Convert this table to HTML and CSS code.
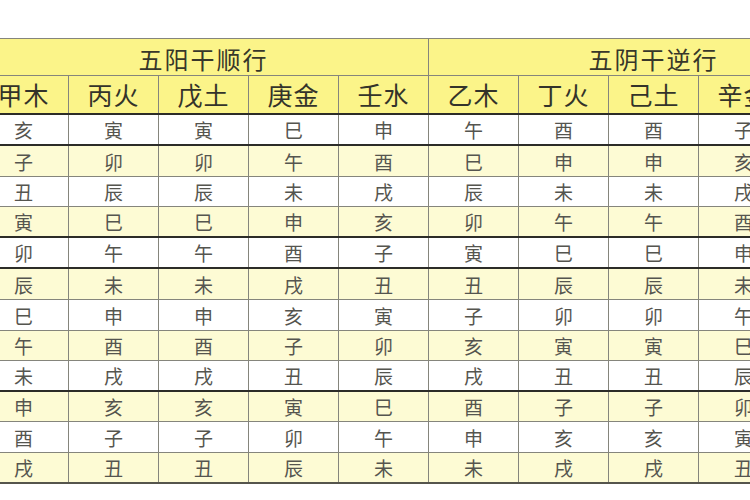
FILE: index.html
```html
<!DOCTYPE html>
<html lang="zh-CN">
<head>
<meta charset="utf-8">
<title>五阳干顺行 五阴干逆行</title>
<link rel="stylesheet" href="styles.css">
</head>
<body>
<div class="page">
<table class="stems">
  <colgroup>
    <col><col><col><col><col><col><col><col><col><col>
  </colgroup>
  <thead>
    <tr class="grp">
      <th colspan="5">五阳干顺行</th>
      <th colspan="5">五阴干逆行</th>
    </tr>
    <tr class="stem">
      <th>甲木</th><th>丙火</th><th>戊土</th><th>庚金</th><th>壬水</th>
      <th>乙木</th><th>丁火</th><th>己土</th><th>辛金</th><th>癸水</th>
    </tr>
  </thead>
  <tbody>
    <tr class="thick h30"><td>亥</td><td>寅</td><td>寅</td><td>巳</td><td>申</td><td>午</td><td>酉</td><td>酉</td><td>子</td><td>卯</td></tr>
    <tr class="h32"><td>子</td><td>卯</td><td>卯</td><td>午</td><td>酉</td><td>巳</td><td>申</td><td>申</td><td>亥</td><td>寅</td></tr>
    <tr class="h30"><td>丑</td><td>辰</td><td>辰</td><td>未</td><td>戌</td><td>辰</td><td>未</td><td>未</td><td>戌</td><td>丑</td></tr>
    <tr class="thick h31"><td>寅</td><td>巳</td><td>巳</td><td>申</td><td>亥</td><td>卯</td><td>午</td><td>午</td><td>酉</td><td>子</td></tr>
    <tr class="thick h30"><td>卯</td><td>午</td><td>午</td><td>酉</td><td>子</td><td>寅</td><td>巳</td><td>巳</td><td>申</td><td>亥</td></tr>
    <tr class="h32"><td>辰</td><td>未</td><td>未</td><td>戌</td><td>丑</td><td>丑</td><td>辰</td><td>辰</td><td>未</td><td>戌</td></tr>
    <tr class="h32"><td>巳</td><td>申</td><td>申</td><td>亥</td><td>寅</td><td>子</td><td>卯</td><td>卯</td><td>午</td><td>酉</td></tr>
    <tr class="h30"><td>午</td><td>酉</td><td>酉</td><td>子</td><td>卯</td><td>亥</td><td>寅</td><td>寅</td><td>巳</td><td>申</td></tr>
    <tr class="thick h31"><td>未</td><td>戌</td><td>戌</td><td>丑</td><td>辰</td><td>戌</td><td>丑</td><td>丑</td><td>辰</td><td>未</td></tr>
    <tr class="h30"><td>申</td><td>亥</td><td>亥</td><td>寅</td><td>巳</td><td>酉</td><td>子</td><td>子</td><td>卯</td><td>午</td></tr>
    <tr class="h32"><td>酉</td><td>子</td><td>子</td><td>卯</td><td>午</td><td>申</td><td>亥</td><td>亥</td><td>寅</td><td>巳</td></tr>
    <tr class="h30 last"><td>戌</td><td>丑</td><td>丑</td><td>辰</td><td>未</td><td>未</td><td>戌</td><td>戌</td><td>丑</td><td>辰</td></tr>
  </tbody>
</table>
</div>
</body>
</html>
```

FILE: styles.css
```css
html, body {
  margin: 0;
  padding: 0;
  background: #ffffff;
}

body {
  width: 750px;
  height: 500px;
  overflow: hidden;
}

.page {
  padding-top: 38px;
}

.stems {
  margin-left: -22px;
  width: 900px;
  table-layout: fixed;
  border-collapse: collapse;
  font-family: "Noto Sans CJK SC", "Noto Sans CJK JP", sans-serif;
  line-height: 1;
}

.stems col {
  width: 90px;
}

.stems th,
.stems td {
  padding: 0;
  text-align: center;
  vertical-align: middle;
  border: 1px solid #85857c;
}

.grp th {
  height: 33px;
  background: #fbf489;
  color: #37372a;
  font-size: 24px;
  font-weight: 400;
  letter-spacing: 2px;
  padding-top: 3px;
}

.stem th {
  height: 37px;
  background: #fbf489;
  color: #33332a;
  font-size: 25px;
  font-weight: 400;
  letter-spacing: 1px;
  border-bottom: 2px solid #2c2c28;
}

.stems td {
  color: #55554f;
  font-size: 19px;
  background: #ffffff;
}

.stems tbody tr:nth-child(even) td {
  background: #fdfbd4;
}

.h30 td { height: 29px; }
.h31 td { height: 29px; }
.h32 td { height: 30px; }

.stems tr.thick td {
  border-bottom: 2px solid #2c2c28;
}

.stems tr.last td {
  border-bottom: 2px solid #55554c;
}
```
